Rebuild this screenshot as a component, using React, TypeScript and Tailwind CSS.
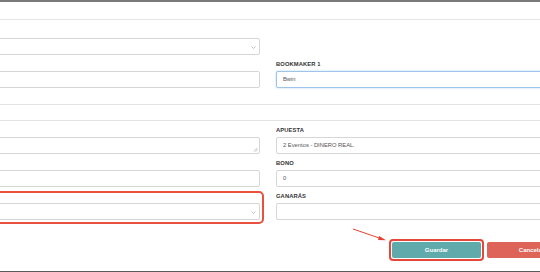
import React from "react";

const Chevron = () => (
  <svg width="5" height="3" viewBox="0 0 5 3" className="absolute right-[3px] top-[7px]">
    <path d="M0.5 0.5 L2.5 2.4 L4.5 0.5" fill="none" stroke="#a0a0a0" strokeWidth="0.7" />
  </svg>
);

const Label = ({ children }: { children: React.ReactNode }) => (
  <div className="h-[8px] leading-[8px] text-[5.8px] font-bold text-[#333] mb-[3px] tracking-[0.1px]">
    {children}
  </div>
);

const Input = ({ value, focus }: { value?: string; focus?: boolean }) => (
  <div
    className={
      "h-[17px] rounded-[2px] border bg-white flex items-center pl-[6px] text-[5.8px] text-[#555] " +
      (focus ? "border-[#9fc4ec] shadow-[0_0_2px_rgba(102,160,230,0.5)]" : "border-[#d6d6d6]")
    }
  >
    {value}
  </div>
);

const Select = () => (
  <div className="relative h-[17px] rounded-[2px] border border-[#d6d6d6] bg-white">
    <Chevron />
  </div>
);

export default function App() {
  return (
    <div
      className="relative w-[540px] h-[272px] overflow-hidden bg-white flex flex-col"
      style={{ fontFamily: '"Liberation Sans", Arial, sans-serif' }}
    >
      <div className="h-[2px] bg-[#7a7a7a]" />
      <div className="mt-[17px] h-px bg-[#e6e6e6]" />

      <div className="ml-[-20px] grid grid-cols-[280px_300px] gap-x-[16px] mt-[18px]">
        <Select />
        <div />
      </div>

      <div className="ml-[-20px] grid grid-cols-[280px_300px] gap-x-[16px] items-end mt-[5px]">
        <Input />
        <div>
          <Label>BOOKMAKER 1</Label>
          <Input value="Bwin" focus />
        </div>
      </div>

      <div className="mt-[16px] h-px bg-[#e3e3e3]" />
      <div className="mt-[15px] h-px bg-[#e3e3e3]" />

      <div className="ml-[-20px] grid grid-cols-[280px_300px] gap-x-[16px] items-end mt-[5px]">
        <div className="relative h-[17px] rounded-[2px] border border-[#d6d6d6] bg-white">
          <svg width="5" height="5" viewBox="0 0 5 5" className="absolute right-[1px] bottom-[1px]">
            <path d="M4.5 0.8 L0.8 4.5 M4.5 2.6 L2.6 4.5" stroke="#a8a8a8" strokeWidth="0.7" />
          </svg>
        </div>
        <div>
          <Label>APUESTA</Label>
          <Input value="2 Eventos - DINERO REAL." />
        </div>
      </div>

      <div className="ml-[-20px] grid grid-cols-[280px_300px] gap-x-[16px] items-end mt-[5px]">
        <Input />
        <div>
          <Label>BONO</Label>
          <Input value="0" />
        </div>
      </div>

      <div className="ml-[-20px] grid grid-cols-[280px_300px] gap-x-[16px] items-end mt-[5px]">
        <Select />
        <div>
          <Label>GANARÁS</Label>
          <Input />
        </div>
      </div>

      <div className="flex items-center mt-[19px] ml-[389px]">
        <div className="shrink-0 rounded-[4px] border-2 border-solid border-[#e5483a] p-px">
          <div className="w-[89px] h-[16px] rounded-[2px] bg-[#61aaab] flex items-center justify-center text-white text-[6px] font-bold">
            Guardar
          </div>
        </div>
        <div className="shrink-0 ml-[3px] w-[89px] h-[16px] rounded-[2px] bg-[#de6358] flex items-center justify-center text-white text-[6px] font-bold">
          Cancelar
        </div>
      </div>

      <div className="mt-auto h-px bg-[#5a5a5a]" />

      <div className="absolute left-[-10px] top-[191px] w-[274px] h-[33px] rounded-[5px] border-2 border-solid border-[#e8503f]" />

      <svg className="absolute left-0 top-0" width="540" height="272" viewBox="0 0 540 272">
        <line x1="353" y1="229" x2="381" y2="238.6" stroke="#e5412e" strokeWidth="1" />
        <polygon points="386,240.3 379.2,236 378,240" fill="#e5412e" />
      </svg>
    </div>
  );
}
